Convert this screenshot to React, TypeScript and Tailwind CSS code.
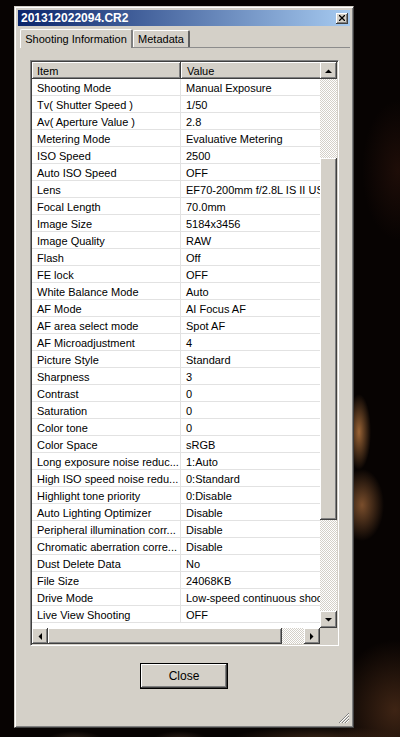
import React from 'react';

// Shooting info rows as shown by the viewer (long labels are pre-truncated)
const ROWS: [string, string][] = [
  ['Shooting Mode', 'Manual Exposure'],
  ['Tv( Shutter Speed )', '1/50'],
  ['Av( Aperture Value )', '2.8'],
  ['Metering Mode', 'Evaluative Metering'],
  ['ISO Speed', '2500'],
  ['Auto ISO Speed', 'OFF'],
  ['Lens', 'EF70-200mm f/2.8L IS II USM'],
  ['Focal Length', '70.0mm'],
  ['Image Size', '5184x3456'],
  ['Image Quality', 'RAW'],
  ['Flash', 'Off'],
  ['FE lock', 'OFF'],
  ['White Balance Mode', 'Auto'],
  ['AF Mode', 'AI Focus AF'],
  ['AF area select mode', 'Spot AF'],
  ['AF Microadjustment', '4'],
  ['Picture Style', 'Standard'],
  ['Sharpness', '3'],
  ['Contrast', '0'],
  ['Saturation', '0'],
  ['Color tone', '0'],
  ['Color Space', 'sRGB'],
  ['Long exposure noise reduc...', '1:Auto'],
  ['High ISO speed noise redu...', '0:Standard'],
  ['Highlight tone priority', '0:Disable'],
  ['Auto Lighting Optimizer', 'Disable'],
  ['Peripheral illumination corr...', 'Disable'],
  ['Chromatic aberration corre...', 'Disable'],
  ['Dust Delete Data', 'No'],
  ['File Size', '24068KB'],
  ['Drive Mode', 'Low-speed continuous shooting'],
  ['Live View Shooting', 'OFF'],
];

const raised =
  'bg-[#d4d0c8] shadow-[inset_-1px_-1px_#404040,inset_1px_1px_#ffffff,inset_-2px_-2px_#808080,inset_2px_2px_#d4d0c8]';
const track =
  'bg-[repeating-conic-gradient(#ffffff_0%_25%,#d4d0c8_0%_50%)] bg-[length:2px_2px]';

function Arrow({ dir }: { dir: 'up' | 'down' | 'left' | 'right' }) {
  const pts = {
    up: '0,4 7,4 3.5,0.5',
    down: '0,0 7,0 3.5,3.5',
    left: '4,0 4,7 0.5,3.5',
    right: '0,0 0,7 3.5,3.5',
  }[dir];
  const vertical = dir === 'up' || dir === 'down';
  return (
    <svg width={vertical ? 7 : 4} height={vertical ? 4 : 7} viewBox={vertical ? '0 0 7 4' : '0 0 4 7'}>
      <polygon points={pts} fill="#000" />
    </svg>
  );
}

function ScrollButton({ dir, className }: { dir: 'up' | 'down' | 'left' | 'right'; className: string }) {
  return (
    <div className={`${raised} ${className} flex items-center justify-center shrink-0`}>
      <Arrow dir={dir} />
    </div>
  );
}

export default function App() {
  return (
    <div
      className="w-[400px] h-[737px] overflow-hidden pl-[14px] pt-[6px] font-['Liberation_Sans',Arial,sans-serif] text-[11px] text-black bg-[#070302] bg-[radial-gradient(ellipse_12px_38px_at_359px_432px,#9a6436,transparent),radial-gradient(ellipse_22px_36px_at_362px_505px,#7a4e2c,transparent),radial-gradient(ellipse_36px_70px_at_398px_170px,#1e0d08,transparent),radial-gradient(ellipse_60px_70px_at_395px_710px,#3e2414,transparent),radial-gradient(ellipse_90px_14px_at_320px_740px,#3c2718,transparent),radial-gradient(ellipse_28px_9px_at_75px_740px,#30231a,transparent),radial-gradient(ellipse_28px_9px_at_180px_740px,#30221a,transparent)]"
    >
      {/* dialog frame */}
      <div className="w-[340px] h-[722px] border border-t-[#d4d0c8] border-l-[#d4d0c8] border-b-[#404040] border-r-[#404040] bg-[#d4d0c8] shadow-[inset_1px_1px_#ffffff,inset_-1px_-1px_#808080] p-[3px] flex flex-col">
        {/* title bar */}
        <div className="h-[16px] flex items-center justify-between pl-[3px] pr-[2px] bg-[linear-gradient(to_right,#0a246a,#a6caf0)]">
          <span className="text-white font-bold text-[12px] leading-none">201312022094.CR2</span>
          <div className={`${raised} w-[12px] h-[11px] flex items-center justify-center`}>
            <svg width="6" height="6" viewBox="0 0 6 6">
              <path d="M0 0L6 6M6 0L0 6" stroke="#000" strokeWidth="1.3" />
            </svg>
          </div>
        </div>

        {/* tabs */}
        <div className="h-[21px] flex items-end pl-[2px]">
          <div className="h-[19px] w-[113px] border-t border-l border-white border-r-2 border-r-[#808080] rounded-t-[2px] flex items-center justify-center relative -mb-[1px] z-10 bg-[#d4d0c8]">
            Shooting Information
          </div>
          <div className="h-[17px] w-[57px] border-t border-l border-white border-r-2 border-r-[#606060] rounded-t-[2px] flex items-center justify-center pt-[1px]">
            Metadata
          </div>
        </div>
        <div className="h-px bg-[#8c8c8c] ml-[2px]" />

        {/* list view */}
        <div className="ml-[12px] mt-[12px] w-[309px] h-[586px] border border-t-[#808080] border-l-[#808080] border-b-white border-r-white shadow-[inset_1px_1px_#404040,inset_-1px_-1px_#d4d0c8] p-px grid grid-cols-[288px_17px] grid-rows-[566px_16px]">
          <div className="overflow-hidden bg-white">
            <div className="flex h-[17px]">
              <div className={`${raised} w-[149px] shrink-0 pl-[5px] pt-px flex items-center`}>Item</div>
              <div className={`${raised} w-[260px] shrink-0 pl-[6px] pt-px flex items-center`}>Value</div>
            </div>
            {ROWS.map(([item, value]) => (
              <div key={item} className="flex h-[17px] border-b border-[#e2e2e2] whitespace-nowrap">
                <div className="w-[149px] shrink-0 border-r border-[#e2e2e2] pl-[5px] pt-[2px] flex items-center overflow-hidden">
                  {item}
                </div>
                <div className="w-[260px] shrink-0 pl-[5px] pt-[2px] flex items-center">{value}</div>
              </div>
            ))}
          </div>

          {/* vertical scrollbar */}
          <div className={`flex flex-col ${track}`}>
            <ScrollButton dir="up" className="h-[17px]" />
            <div className="h-[79px]" />
            <div className={`${raised} h-[362px]`} />
            <div className="flex-1" />
            <ScrollButton dir="down" className="h-[17px]" />
          </div>

          {/* horizontal scrollbar */}
          <div className={`flex ${track}`}>
            <ScrollButton dir="left" className="w-[16px]" />
            <div className={`${raised} w-[234px]`} />
            <div className="flex-1" />
            <ScrollButton dir="right" className="w-[16px]" />
          </div>
          <div className="bg-[#d4d0c8]" />
        </div>

        {/* footer */}
        <div className="flex-1 flex flex-col">
          <div className="mt-[17px] flex justify-center">
            <button className="w-[88px] h-[26px] border border-black bg-[#d4d0c8] shadow-[inset_-1px_-1px_#404040,inset_1px_1px_#ffffff,inset_-2px_-2px_#808080] text-[12px] flex items-center justify-center">
              Close
            </button>
          </div>
          <div className="flex-1 flex items-end justify-end">
            <svg width="12" height="12" viewBox="0 0 12 12">
              <path d="M11 1L1 11M11 4L4 11M11 7L7 11" stroke="#808080" strokeWidth="1" />
              <path d="M11 2L2 11M11 5L5 11M11 8L8 11" stroke="#ffffff" strokeWidth="1" />
            </svg>
          </div>
        </div>
      </div>
    </div>
  );
}
